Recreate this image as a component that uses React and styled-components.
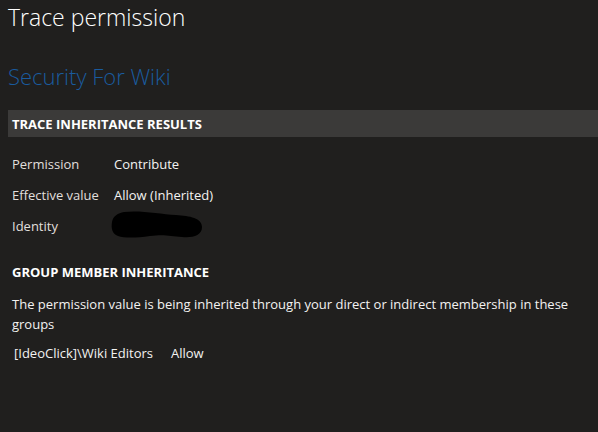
import styled, { createGlobalStyle } from 'styled-components';

const GlobalStyle = createGlobalStyle`
  html, body {
    margin: 0;
    padding: 0;
    background: #201f1e;
  }
  body {
    font-family: 'Open Sans', 'Noto Sans', sans-serif;
    color: #f3f2f1;
  }
`;

const Page = styled.div`
  width: 598px;
  height: 432px;
  box-sizing: border-box;
  padding: 0 0 0 8px;
  background: #201f1e;
  overflow: hidden;
`;

const Title = styled.h1`
  margin: 0;
  padding-top: 1px;
  font-size: 23px;
  font-weight: 300;
  line-height: 32px;
  color: #ffffff;
`;

const SubTitle = styled.h2`
  margin: 28px 0 0;
  font-size: 22px;
  font-weight: 300;
  line-height: 30px;
  color: #1a5b9e;
`;

const SectionBar = styled.div`
  margin-top: 19px;
  height: 27px;
  display: flex;
  align-items: center;
  padding-left: 4px;
  background: #3b3a39;
  font-size: 13px;
  font-weight: 700;
  color: #ffffff;
`;

const Body = styled.div`
  padding: 0 4px;
`;

const InfoGrid = styled.div`
  margin-top: 11px;
  display: grid;
  grid-template-columns: 102px auto;
  grid-auto-rows: 31px;
  align-items: center;
  font-size: 13px;
`;

const Label = styled.span`
  color: #e1dfdd;
`;

const Value = styled.span`
  color: #f3f2f1;
`;

const Redacted = styled.svg`
  display: block;
  margin: -3px 0 0 -4px;
`;

const GroupHeader = styled.h3`
  margin: 22px 0 0;
  font-size: 13px;
  font-weight: 700;
  line-height: 18px;
  color: #ffffff;
`;

const Paragraph = styled.p`
  margin: 13px 0 0;
  width: 572px;
  font-size: 13px;
  line-height: 20px;
  color: #f3f2f1;
`;

const GroupRow = styled.div`
  margin-top: 9px;
  padding-left: 2px;
  display: flex;
  gap: 18px;
  font-size: 13px;
  line-height: 20px;
`;

const rows = [
  { label: 'Permission', value: 'Contribute' },
  { label: 'Effective value', value: 'Allow (Inherited)' },
];

const App = () => {
  return (
    <Page>
      <GlobalStyle />
      <Title>Trace permission</Title>
      <SubTitle>Security For Wiki</SubTitle>
      <SectionBar>TRACE INHERITANCE RESULTS</SectionBar>
      <Body>
        <InfoGrid>
          {rows.map(row => (
            <>
              <Label key={row.label}>{row.label}</Label>
              <Value key={row.value}>{row.value}</Value>
            </>
          ))}
          <Label>Identity</Label>
          <Redacted width='94' height='29' viewBox='0 0 94 29'>
            <path
              d='M14 2 C30 0 50 4 66 5 C80 6 92 8 92 17 C92 26 82 28 72 27 C60 26 54 24 40 26 C26 28 14 28 8 26 C2 24 1 18 2 12 C3 6 8 3 14 2 Z'
              fill='#000000'
            />
          </Redacted>
        </InfoGrid>
        <GroupHeader>GROUP MEMBER INHERITANCE</GroupHeader>
        <Paragraph>
          The permission value is being inherited through your direct or
          indirect membership in these groups
        </Paragraph>
        <GroupRow>
          <span>[IdeoClick]\Wiki Editors</span>
          <span>Allow</span>
        </GroupRow>
      </Body>
    </Page>
  );
};

export default App;
